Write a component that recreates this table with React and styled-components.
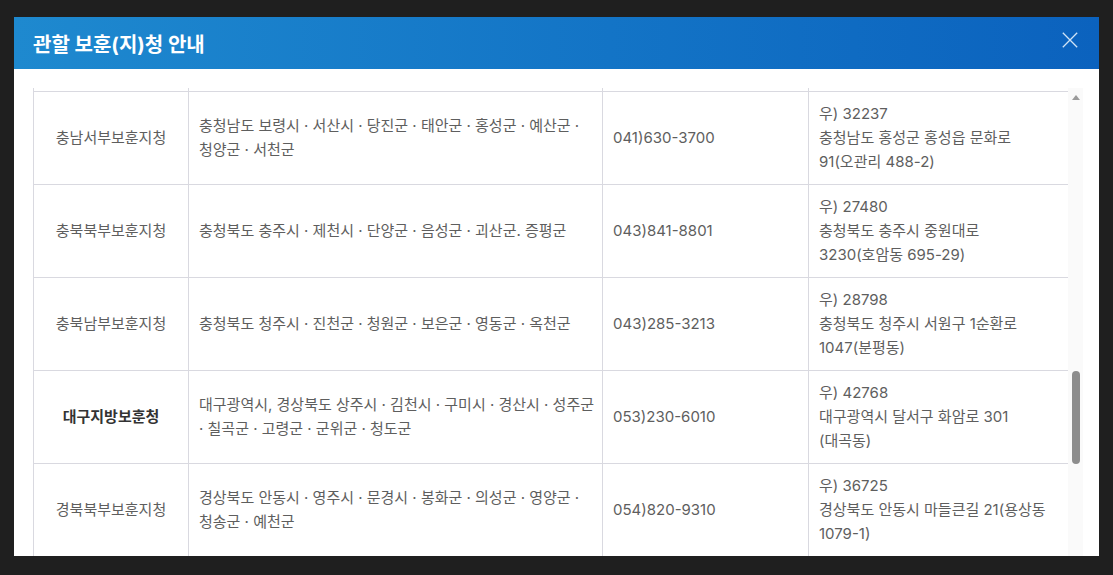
import React, { useLayoutEffect, useRef, useState } from 'react';
import styled, { createGlobalStyle } from 'styled-components';

const GlobalStyle = createGlobalStyle`
  html, body {
    margin: 0;
    padding: 0;
    background: #1f1f1f;
  }
  body {
    font-family: Inter, 'Noto Sans CJK KR', sans-serif;
  }
`;

const Screen = styled.div`
  width: 1113px;
  height: 575px;
  padding: 17px 0 0 14px;
  box-sizing: border-box;
  overflow: hidden;
`;

const Modal = styled.div`
  width: 1085px;
  height: 539px;
  background: #fff;
  display: flex;
  flex-direction: column;
  overflow: hidden;
`;

const Header = styled.div`
  height: 52px;
  flex-shrink: 0;
  display: flex;
  align-items: center;
  justify-content: space-between;
  padding: 0 19px 0 19px;
  background: linear-gradient(90deg, #1e89cf 0%, #1374c6 55%, #0b62be 100%);
`;

const Title = styled.h2`
  margin: 0;
  color: #fff;
  font-family: Inter, 'Noto Sans CJK KR', sans-serif;
  font-size: 20px;
  font-weight: 700;
  letter-spacing: 0;
`;

const CloseBtn = styled.button`
  width: 20px;
  height: 20px;
  margin-bottom: 7px;
  padding: 0;
  border: 0;
  background: none;
  display: flex;
  align-items: center;
  justify-content: center;
  cursor: pointer;
`;

const Body = styled.div`
  flex: 1;
  min-height: 0;
  display: flex;
  padding: 19px 16px 0 19px;
`;

const Scroller = styled.div`
  width: 1035px;
  height: 100%;
  overflow-y: auto;
  scrollbar-width: none;

  &::-webkit-scrollbar {
    display: none;
  }
`;

const Rail = styled.div`
  width: 15px;
  flex-shrink: 0;
  background: #fafafa;
  display: flex;
  flex-direction: column;
  align-items: center;
`;

const RailArrow = styled.div`
  height: 16px;
  width: 100%;
  flex-shrink: 0;
  display: flex;
  justify-content: center;
  padding-top: 7px;
  box-sizing: border-box;

  &::before {
    content: '';
    width: 0;
    height: 0;
    border-left: 4px solid transparent;
    border-right: 4px solid transparent;
    border-bottom: 5px solid #9b9b9b;
  }
`;

const Thumb = styled.div`
  width: 8px;
  flex-shrink: 0;
  border-radius: 4px;
  background: #8d8d8d;
  margin-left: 1px;
`;

const Table = styled.table`
  width: 1035px;
  table-layout: fixed;
  border-collapse: collapse;
  font-family: Inter, 'Noto Sans CJK KR', sans-serif;
  font-size: 15px;
  line-height: 24px;
  color: #5a5a5a;
`;

const HeadCell = styled.th`
  height: 44px;
  border: 1px solid #d9d9e0;
  background: #f4f5f7;
  color: #333;
  font-weight: 700;
  text-align: center;
`;

const Cell = styled.td`
  border: 1px solid #d9d9e0;
  padding: 10px 10px;
  vertical-align: middle;
  text-align: ${(p) => (p.$center ? 'center' : 'left')};
  font-weight: ${(p) => (p.$strong ? 700 : 400)};
  color: ${(p) => (p.$strong ? '#333' : '#5e5e5e')};
`;

const Line = styled.span`
  display: block;
  white-space: nowrap;
`;

const offices = [
  {
    name: '서울지방보훈청',
    area: ['서울특별시 종로구 · 중구 · 용산구 · 성동구 · 광진구 ·', '동대문구 · 중랑구 · 성북구'],
    tel: '02)2008-1700',
    addr: ['우) 04513', '서울특별시 중구 세종대로 9길', '20(서소문동)'],
  },
  {
    name: '서울남부보훈지청',
    area: ['서울특별시 영등포구 · 구로구 · 금천구 · 관악구 · 동작구 ·', '양천구 · 강서구'],
    tel: '02)2680-2100',
    addr: ['우) 07292', '서울특별시 영등포구 문래로', '164(문래동)'],
  },
  {
    name: '서울북부보훈지청',
    area: ['서울특별시 강북구 · 도봉구 · 노원구 · 은평구 · 서대문구 ·', '마포구'],
    tel: '02)944-7700',
    addr: ['우) 01369', '서울특별시 도봉구 마들로', '749(도봉동)'],
  },
  {
    name: '서울동부보훈지청',
    area: ['서울특별시 강남구 · 서초구 · 송파구 · 강동구'],
    tel: '02)2140-1800',
    addr: ['우) 05510', '서울특별시 송파구 올림픽로', '300(신천동)'],
  },
  {
    name: '인천보훈지청',
    area: ['인천광역시, 경기도 부천시 · 김포시'],
    tel: '032)430-9100',
    addr: ['우) 21554', '인천광역시 남동구 정각로', '29(구월동)'],
  },
  {
    name: '경기남부보훈지청',
    area: ['경기도 수원시 · 화성시 · 오산시 · 평택시 · 안성시 · 용인시 ·', '이천시 · 여주시'],
    tel: '031)259-7200',
    addr: ['우) 16514', '경기도 수원시 팔달구 효원로', '1(매산로3가)'],
  },
  {
    name: '경기동부보훈지청',
    area: ['경기도 성남시 · 하남시 · 광주시 · 양평군 · 가평군 · 구리시 ·', '남양주시'],
    tel: '031)750-5300',
    addr: ['우) 13105', '경기도 성남시 수정구 수정로', '218(태평동)'],
  },
  {
    name: '경기북부보훈지청',
    area: ['경기도 의정부시 · 양주시 · 동두천시 · 포천시 · 연천군 ·', '고양시 · 파주시'],
    tel: '031)870-9000',
    addr: ['우) 11691', '경기도 의정부시 청사로', '1(금오동)'],
  },
  {
    name: '경기서부보훈지청',
    area: ['경기도 안양시 · 안산시 · 시흥시 · 광명시 · 군포시 · 의왕시 ·', '과천시'],
    tel: '031)427-3800',
    addr: ['우) 14067', '경기도 안양시 동안구 시민대로', '235(관양동)'],
  },
  {
    name: '강원서부보훈지청',
    area: ['강원특별자치도 춘천시 · 원주시 · 홍천군 · 횡성군 · 화천군 ·', '양구군 · 인제군 · 철원군'],
    tel: '033)258-6100',
    addr: ['우) 24236', '강원특별자치도 춘천시 영서로', '2128(퇴계동)'],
  },
  {
    name: '강원동부보훈지청',
    area: ['강원특별자치도 강릉시 · 동해시 · 삼척시 · 속초시 · 태백시 ·', '양양군 · 고성군 · 평창군 · 정선군 · 영월군'],
    tel: '033)649-6300',
    addr: ['우) 25517', '강원특별자치도 강릉시 강릉대로', '33(홍제동)'],
  },
  {
    name: '대전지방보훈청',
    area: ['대전광역시, 세종특별자치시, 충청남도 공주시 · 논산시 ·', '계룡시 · 금산군 · 부여군 · 청양군'],
    tel: '042)939-6100',
    addr: ['우) 35208', '대전광역시 서구 청사로', '189(둔산동)'],
  },
  {
    name: '충남동부보훈지청',
    area: ['충청남도 천안시 · 아산시'],
    tel: '041)520-1600',
    addr: ['우) 31118', '충청남도 천안시 동남구 중앙로', '92(문화동)'],
  },
  {
    name: '충남남부보훈지청',
    area: ['충청남도 논산시 · 계룡시 · 부여군'],
    tel: '041)730-1800',
    addr: ['우) 32959', '충청남도 논산시 시민로', '210(내동)'],
  },
  {
    name: '충남서부보훈지청',
    area: ['충청남도 보령시 · 서산시 · 당진군 · 태안군 · 홍성군 · 예산군 ·', '청양군 · 서천군'],
    tel: '041)630-3700',
    addr: ['우) 32237', '충청남도 홍성군 홍성읍 문화로', '91(오관리 488-2)'],
    anchor: true,
  },
  {
    name: '충북북부보훈지청',
    area: ['충청북도 충주시 · 제천시 · 단양군 · 음성군 · 괴산군. 증평군'],
    tel: '043)841-8801',
    addr: ['우) 27480', '충청북도 충주시 중원대로', '3230(호암동 695-29)'],
  },
  {
    name: '충북남부보훈지청',
    area: ['충청북도 청주시 · 진천군 · 청원군 · 보은군 · 영동군 · 옥천군'],
    tel: '043)285-3213',
    addr: ['우) 28798', '충청북도 청주시 서원구 1순환로', '1047(분평동)'],
  },
  {
    name: '대구지방보훈청',
    area: ['대구광역시, 경상북도 상주시 · 김천시 · 구미시 · 경산시 · 성주군', '· 칠곡군 · 고령군 · 군위군 · 청도군'],
    tel: '053)230-6010',
    addr: ['우) 42768', '대구광역시 달서구 화암로 301', '(대곡동)'],
    strong: true,
  },
  {
    name: '경북북부보훈지청',
    area: ['경상북도 안동시 · 영주시 · 문경시 · 봉화군 · 의성군 · 영양군 ·', '청송군 · 예천군'],
    tel: '054)820-9310',
    addr: ['우) 36725', '경상북도 안동시 마들큰길 21(용상동', '1079-1)'],
  },
  {
    name: '경북남부보훈지청',
    area: ['경상북도 포항시 · 경주시 · 영천시 · 영덕군 · 울진군 ·', '울릉군'],
    tel: '054)270-7500',
    addr: ['우) 37770', '경상북도 포항시 북구 양덕로', '50(장성동)'],
  },
  {
    name: '부산지방보훈청',
    area: ['부산광역시, 경상남도 김해시 · 양산시 · 밀양시'],
    tel: '051)660-6200',
    addr: ['우) 47545', '부산광역시 연제구 월드컵대로', '125(연산동)'],
  },
  {
    name: '광주지방보훈청',
    area: ['광주광역시, 전라남도 나주시 · 담양군 · 곡성군 · 화순군 ·', '장성군 · 영광군 · 함평군'],
    tel: '062)975-6300',
    addr: ['우) 61949', '광주광역시 서구 시청로', '48(치평동)'],
  },
  {
    name: '전북서부보훈지청',
    area: ['전북특별자치도 전주시 · 군산시 · 익산시 · 김제시 · 정읍시 ·', '부안군 · 고창군 · 완주군'],
    tel: '063)280-1100',
    addr: ['우) 54968', '전북특별자치도 전주시 완산구', '서원로 72(효자동)'],
  },
  {
    name: '제주보훈지청',
    area: ['제주특별자치도'],
    tel: '064)720-1300',
    addr: ['우) 63122', '제주특별자치도 제주시 문연로', '6(연동)'],
  },
];

function CloseIcon() {
  return (
    <svg width="16" height="16" viewBox="0 0 16 16" fill="none">
      <path d="M0.8 0.8L15.2 15.2M15.2 0.8L0.8 15.2" stroke="#cfe3f6" strokeWidth="1.3" />
    </svg>
  );
}

function Lines({ items }) {
  return items.map((t, i) => <Line key={i}>{t}</Line>);
}

const ARROW_H = 16;

function App() {
  const scrollRef = useRef(null);
  const anchorRef = useRef(null);
  const [thumb, setThumb] = useState({ top: 0, height: 0 });

  const measure = () => {
    const box = scrollRef.current;
    if (!box) return;
    const track = box.clientHeight - ARROW_H;
    const height = Math.max(20, Math.round((track * box.clientHeight) / box.scrollHeight));
    const range = box.scrollHeight - box.clientHeight;
    const top = range > 0 ? Math.round(((track - height) * box.scrollTop) / range) : 0;
    setThumb({ top, height });
  };

  useLayoutEffect(() => {
    const box = scrollRef.current;
    const row = anchorRef.current;
    if (!box || !row) return;
    const top = row.getBoundingClientRect().top - box.getBoundingClientRect().top;
    box.scrollTop = top - 4;
    measure();
  }, []);

  return (
    <>
      <GlobalStyle />
      <Screen>
        <Modal>
          <Header>
            <Title>관할 보훈(지)청 안내</Title>
            <CloseBtn aria-label="닫기">
              <CloseIcon />
            </CloseBtn>
          </Header>
          <Body>
            <Scroller ref={scrollRef} onScroll={measure}>
              <Table>
                <colgroup>
                  <col style={{ width: '155px' }} />
                  <col style={{ width: '414px' }} />
                  <col style={{ width: '206px' }} />
                  <col style={{ width: '260px' }} />
                </colgroup>
                <thead>
                  <tr>
                    <HeadCell>보훈관서</HeadCell>
                    <HeadCell>관할구역</HeadCell>
                    <HeadCell>전화번호</HeadCell>
                    <HeadCell>주소</HeadCell>
                  </tr>
                </thead>
                <tbody>
                  {offices.map((o) => (
                    <tr key={o.name} ref={o.anchor ? anchorRef : null}>
                      <Cell $center $strong={o.strong}>
                        {o.name}
                      </Cell>
                      <Cell>
                        <Lines items={o.area} />
                      </Cell>
                      <Cell>{o.tel}</Cell>
                      <Cell>
                        <Lines items={o.addr} />
                      </Cell>
                    </tr>
                  ))}
                </tbody>
              </Table>
            </Scroller>
            <Rail>
              <RailArrow />
              <Thumb style={{ marginTop: thumb.top, height: thumb.height }} />
            </Rail>
          </Body>
        </Modal>
      </Screen>
    </>
  );
}

export default App;
